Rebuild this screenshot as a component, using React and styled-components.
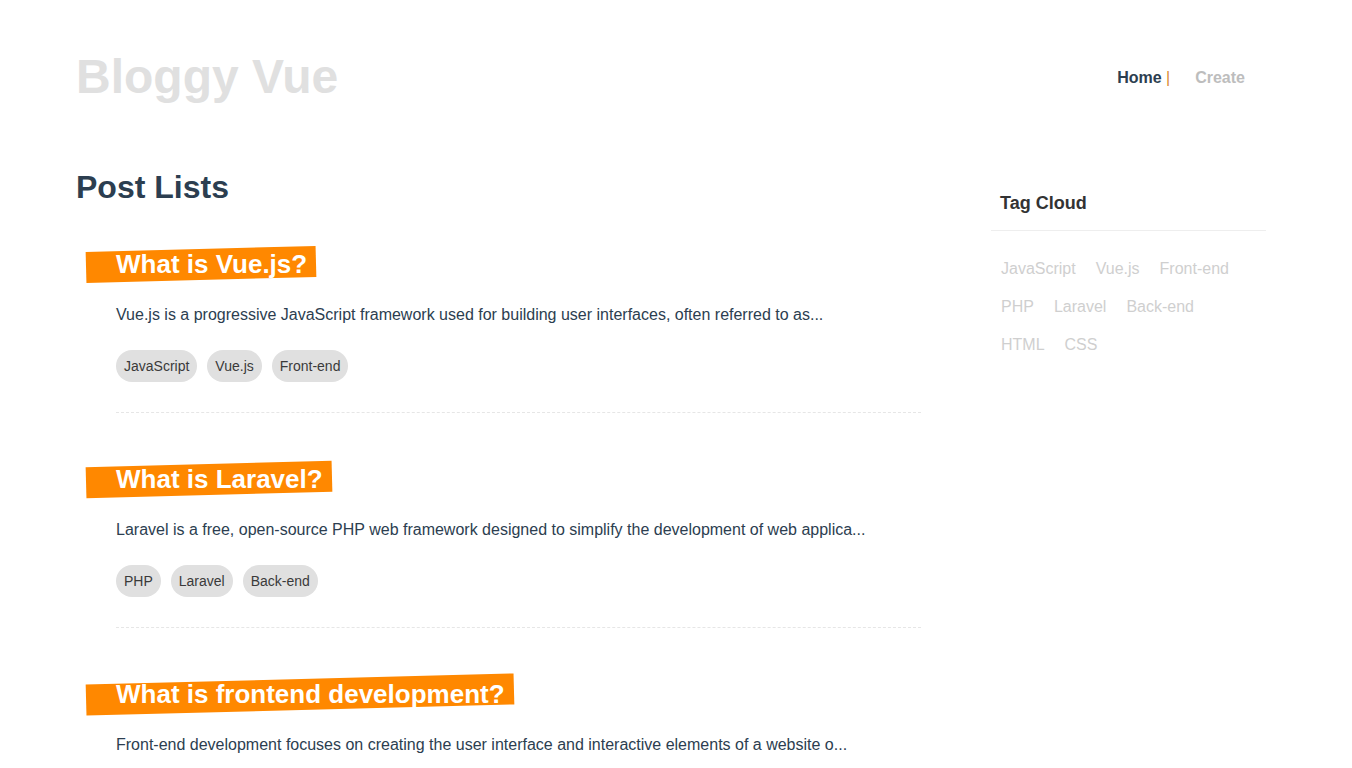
import React from "react";
import styled, { createGlobalStyle } from "styled-components";

const GlobalStyle = createGlobalStyle`
  html, body { margin: 0; padding: 0; background: #fff; }
  body {
    font-family: "Liberation Sans", Arial, Helvetica, sans-serif;
    color: #2c3e50;
    -webkit-font-smoothing: antialiased;
  }
  * { box-sizing: border-box; }
`;

const Container = styled.div`
  max-width: 1200px;
  margin: 0 auto;
`;

const Header = styled.header`
  display: flex;
  align-items: center;
  justify-content: space-between;
  padding-top: 47px;
`;

const Logo = styled.div`
  font-size: 48px;
  line-height: 60px;
  font-weight: 700;
  color: #e0e0e0;
`;

const Nav = styled.nav`
  display: flex;
  align-items: center;
  margin-right: 31px;
  padding-top: 1px;
  font-size: 16px;
  font-weight: 700;
  line-height: 20px;
`;

const NavLink = styled.a`
  color: ${(p) => (p.$active ? "#2c3e50" : "#bdbdbd")};
  text-decoration: none;
  margin-left: ${(p) => (p.$first ? "0" : "25px")};
  cursor: pointer;
`;

const Pipe = styled.span`
  color: #d98a30;
  font-weight: 400;
`;

const Layout = styled.div`
  display: grid;
  grid-template-columns: 885px 275px;
  column-gap: 30px;
  margin-top: 60px;
  align-items: start;
`;

const Main = styled.main``;

const PageTitle = styled.h1`
  margin: 0 0 42px;
  font-size: 32px;
  line-height: 40px;
  font-weight: 700;
  color: #2c3e50;
`;

const Post = styled.article`
  margin: 0 40px 51px;
  padding-bottom: 30px;
  border-bottom: 1px dashed #e6e6e6;
`;

const PostTitle = styled.h2`
  display: inline-block;
  position: relative;
  isolation: isolate;
  margin: 0;
  font-size: 26px;
  line-height: 31px;
  font-weight: 700;
  color: #fff;

  &::before {
    content: "";
    position: absolute;
    top: 0;
    bottom: 0;
    left: -30px;
    right: -9px;
    background: #ff8800;
    transform: rotate(-1.5deg);
    z-index: -1;
  }
`;

const Excerpt = styled.p`
  margin: 23px 0 23px;
  font-size: 16px;
  line-height: 24px;
  color: #2c3e50;
`;

const Pills = styled.div`
  display: flex;
  gap: 10px;
`;

const Pill = styled.span`
  display: inline-flex;
  align-items: center;
  height: 32px;
  padding: 0 8px;
  border-radius: 16px;
  background: #e0e0e0;
  color: #3a3a3a;
  font-size: 14px;
`;

const Sidebar = styled.aside`
  padding-top: 24px;
`;

const SideTitle = styled.h3`
  margin: 0;
  padding: 0 9px 15px;
  font-size: 18px;
  line-height: 24px;
  font-weight: 700;
  color: #333;
  border-bottom: 1px solid #eeeeee;
`;

const TagList = styled.div`
  display: flex;
  flex-wrap: wrap;
  padding: 19px 9px 0 10px;
`;

const CloudTag = styled.a`
  margin-right: 20px;
  font-size: 16px;
  line-height: 38px;
  color: #cfcfcf;
  text-decoration: none;
  cursor: pointer;
`;

const posts = [
  {
    title: "What is Vue.js?",
    excerpt:
      "Vue.js is a progressive JavaScript framework used for building user interfaces, often referred to as...",
    tags: ["JavaScript", "Vue.js", "Front-end"],
  },
  {
    title: "What is Laravel?",
    excerpt:
      "Laravel is a free, open-source PHP web framework designed to simplify the development of web applica...",
    tags: ["PHP", "Laravel", "Back-end"],
  },
  {
    title: "What is frontend development?",
    excerpt:
      "Front-end development focuses on creating the user interface and interactive elements of a website o...",
    tags: ["HTML", "CSS", "Front-end"],
  },
];

const cloud = ["JavaScript", "Vue.js", "Front-end", "PHP", "Laravel", "Back-end", "HTML", "CSS"];

export default function App() {
  return (
    <>
      <GlobalStyle />
      <Container>
        <Header>
          <Logo>Bloggy Vue</Logo>
          <Nav>
            <NavLink $active $first>
              Home <Pipe>|</Pipe>
            </NavLink>
            <NavLink>Create</NavLink>
          </Nav>
        </Header>
        <Layout>
          <Main>
            <PageTitle>Post Lists</PageTitle>
            {posts.map((p) => (
              <Post key={p.title}>
                <PostTitle>{p.title}</PostTitle>
                <Excerpt>{p.excerpt}</Excerpt>
                <Pills>
                  {p.tags.map((t) => (
                    <Pill key={t}>{t}</Pill>
                  ))}
                </Pills>
              </Post>
            ))}
          </Main>
          <Sidebar>
            <SideTitle>Tag Cloud</SideTitle>
            <TagList>
              {cloud.map((t) => (
                <CloudTag key={t}>{t}</CloudTag>
              ))}
            </TagList>
          </Sidebar>
        </Layout>
      </Container>
    </>
  );
}
